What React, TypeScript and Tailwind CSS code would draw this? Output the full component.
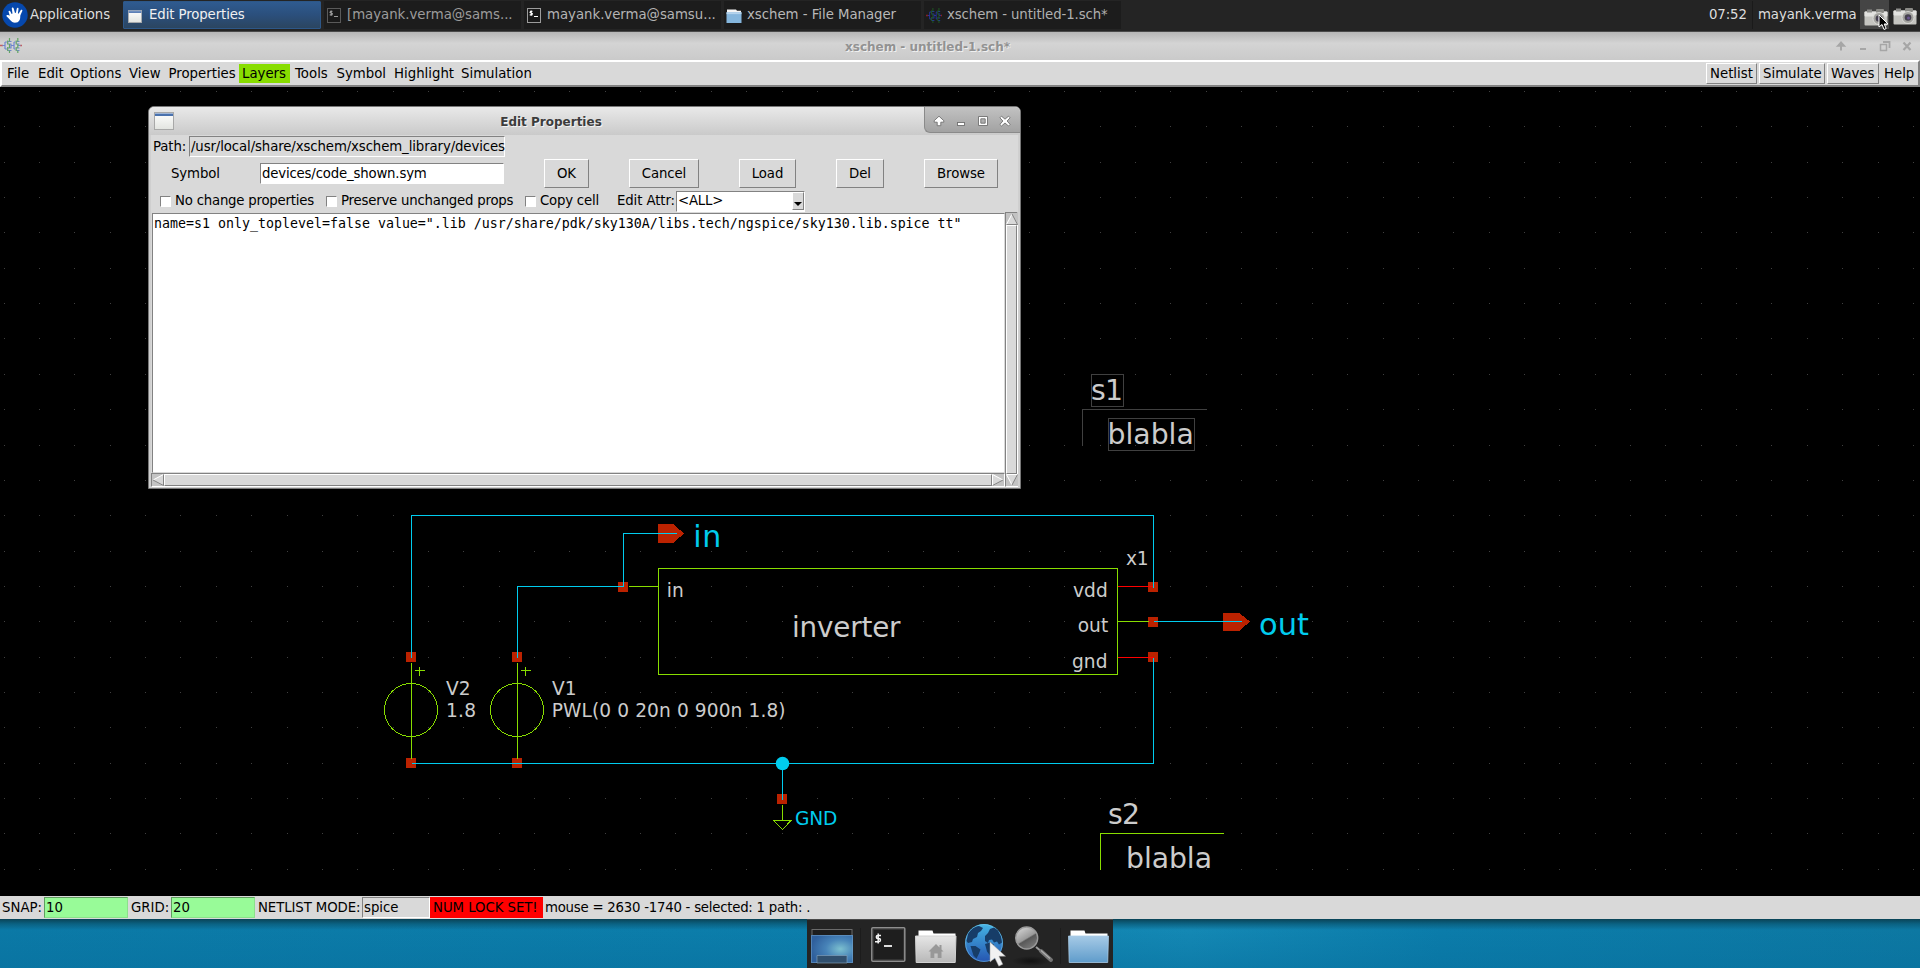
import React from "react";

const WIRE = "#00ccee";
const SYM = "#88dd00";
const PIN = "#bb2200";
const TXT = "#cccccc";

const FONT = "font-['DejaVu_Sans',sans-serif]";

function SchemIcon({ dim = false, className = "" }: { dim?: boolean; className?: string }) {
  const blue = dim ? "#26349c" : "#6f86cf";
  const green = dim ? "#1f5f22" : "#62a562";
  const red = dim ? "#8a2020" : "#c46060";
  return (
    <svg viewBox="0 0 22 15" className={className} fill="none" preserveAspectRatio="none">
      <path d="M0 7.500h3M20 7.500h2" stroke={red} strokeWidth="1.400" />
      <path d="M2.500 7.500H5M5 4v7M5 4h2M5 11h2M14 4v7M11 7.500h3M14 4h1.500M14 11h1.500M18 7.500h2.500" stroke={blue} strokeWidth="1.200" />
      <path d="M8 3.500h3.500M8 6h3.500M8 10h3.500M8 12.500h3.500M16.500 3.500h3M16.500 6h3M16.500 10h3M16.500 12.500h3M11 6v4" stroke={blue} strokeWidth="1.200" />
      <path d="M9.500 0v3.500M9.500 12.500V15M17.800 0v3.500M17.800 12.500V15M9.500 6v4M17.800 6v4M7.700 2.500v4M7.700 9v4M16.200 2.500v4M16.200 9v4" stroke={green} strokeWidth="1.200" />
    </svg>
  );
}

function WindowIcon({ className = "" }: { className?: string }) {
  return (
    <svg viewBox="0 0 20 18" className={className} preserveAspectRatio="none">
      <defs>
        <linearGradient id="winBody" x1="0" y1="0" x2="0" y2="1">
          <stop offset="0" stopColor="#ffffff" />
          <stop offset="1" stopColor="#e2e4e0" />
        </linearGradient>
      </defs>
      <rect x="0.5" y="0.5" width="19" height="17" fill="url(#winBody)" stroke="#a8a8a8" />
      <rect x="1" y="1" width="18" height="3" fill="#4a72ae" />
      <rect x="1" y="1" width="18" height="1" fill="#9db4d6" />
    </svg>
  );
}

function TermIcon({ dim = false }: { dim?: boolean }) {
  const c = dim ? "#9a9a9a" : "#ffffff";
  return (
    <svg viewBox="0 0 14 15" className="h-[15px] w-[14px]">
      <rect x="0.5" y="0.5" width="13" height="14" fill="#1a1a1a" stroke={dim ? "#5a5a5a" : "#9c9c9c"} />
      <path d="M5.400 3.400H3.600L3 4.300l2.400 1.500-.5 1.100H2.700M4.200 2.600v5.200M7 8.500h4" stroke={c} strokeWidth="1.100" fill="none" />
    </svg>
  );
}

function FolderIcon() {
  return (
    <svg viewBox="0 0 16 15" className="mt-px h-[14px] w-[16px]" preserveAspectRatio="none">
      <path d="M1 3V0.500h9l1 1.500h4V6H1z" fill="#f4f4f4" />
      <rect x="0.500" y="3.500" width="15" height="11.500" fill="#85b6dd" />
      <rect x="0.500" y="3.500" width="15" height="2" fill="#b4d3ec" />
    </svg>
  );
}

function Camera() {
  return (
    <svg viewBox="0 0 24 17" className="h-[17px] w-[24px]">
      <rect x="0.500" y="2.500" width="23" height="14" rx="1" fill="#c4c4c0" />
      <rect x="0.500" y="2.500" width="23" height="5" rx="1" fill="#e2e2e0" />
      <rect x="3" y="0.500" width="5" height="3" fill="#8c8c8a" />
      <rect x="12" y="0" width="8" height="4" rx="1" fill="#8a8a86" />
      <circle cx="15" cy="9.500" r="6" fill="#a2a29e" stroke="#e4e4e2" strokeWidth="0.800" />
      <circle cx="15" cy="9.500" r="3.300" fill="#45404f" />
      <circle cx="15.500" cy="10" r="1.500" fill="#6a5590" />
    </svg>
  );
}

const tasks = [
  { label: "[mayank.verma@sams...", icon: <TermIcon dim />, color: "text-[#9c9c9c] tracking-[-0.020px]" },
  { label: "mayank.verma@samsu...", icon: <TermIcon />, color: "text-[#b4b4b4] tracking-[-0.020px]" },
  { label: "xschem - File Manager", icon: <FolderIcon />, color: "text-[#b8b8b8] tracking-[-0.030px]" },
  { label: "xschem - untitled-1.sch*", icon: <SchemIcon dim className="h-[15px] w-[16px]" />, color: "text-[#b0b0b0] tracking-[-0.100px]" },
];

function Panel() {
  return (
    <div className="flex h-8 items-start border-b border-[#4a4a4a] bg-[#242424] text-[13.300px] leading-[30px] tracking-[-0.100px] text-[#dedede]">
      <div className="flex h-[30px] w-[123px] items-center pl-[2px]">
        <svg viewBox="0 0 26 26" className="h-[26px] w-[26px] shrink-0">
          <circle cx="13" cy="13" r="12.700" fill="#0648ad" />
          <path
            d="M6.500 9.500c.2-1.200 1.500-1 1.900 0l1.200 2.400.9-.3L9.800 6.700c-.1-1.300 1.500-1.500 1.900-.2l1.300 4.400.9-.1.900-4.200c.4-1.200 1.900-.9 1.700.4l-.6 4.300.7.400 2.200-3.600c.8-.9 2-.1 1.500 1l-1.900 4.100c-.3 1.200 0 2.300-.4 3.700-.5 1.900-1.700 3.200-3.700 3.700-2.700.5-4.700-.8-6.200-2.700-1.200-1.500-2.400-2.500-3.400-3.400-.7-1.100.2-1.900 1.400-1.400l1.700.7z"
            fill="#fff"
          />
        </svg>
        <span className="ml-[2px]">Applications</span>
      </div>
      <div className="mt-px flex h-7 w-[198px] items-center rounded-[1px] border border-[#2d5788] bg-gradient-to-b from-[#2f5b90] via-[#2b4f7c] to-[#2b4560] pl-1 text-[#f0f0f0]">
        <WindowIcon className="mt-[2px] h-[13px] w-[14px]" />
        <span className="ml-[7px]">Edit Properties</span>
      </div>
      <div className="flex pl-[3px]">
        {tasks.map((t) => (
          <div key={t.label} className={"mr-[3px] mt-px flex h-7 w-[197px] items-center bg-[#1c1c1c] pl-[2px] " + t.color}>
            <span className="flex w-4 shrink-0 justify-center">{t.icon}</span>
            <span className="ml-[5px] whitespace-nowrap">{t.label}</span>
          </div>
        ))}
      </div>
      <div className="ml-auto flex">
        <span className="w-[43px]">07:52</span>
        <span className="mt-px h-7 w-px bg-[#1a1a1a]" />
        <span className="w-[107px] pl-[5px]">mayank.verma</span>
        <div className="relative h-[29px] w-[29px] bg-[#454545] pl-1 pt-[9px]">
          <Camera />
          <svg viewBox="0 0 11 17" className="absolute left-[18px] top-[14px] h-[17px] w-[11px]">
            <path d="M1 1v12l3-2.500 2 5 2.200-1-2-4.500H10z" fill="#000" stroke="#fff" strokeWidth="1" />
          </svg>
        </div>
        <div className="w-[31px] pl-1 pt-2">
          <Camera />
        </div>
      </div>
    </div>
  );
}

const menus: [string, string][] = [
  ["File", "w-8 pl-[5px]"],
  ["Edit", "w-[33px] pl-1"],
  ["Options", "w-[58px] pl-[3px]"],
  ["View", "w-10 pl-1"],
  ["Properties", "w-[74px] pl-[3.500px]"],
  ["Layers", "w-[51px] pl-[3px] bg-[#88dd00]"],
  ["Tools", "w-[43px] pl-[5px]"],
  ["Symbol", "w-[57px] pl-[3.500px]"],
  ["Highlight", "w-[67px] pl-1"],
  ["Simulation", "w-[78px] pl-1"],
];

function TitleBar() {
  return (
    <div className="relative flex h-7 items-center justify-center bg-gradient-to-b from-[#b6b6b6] via-[#d4d4d4] via-40% to-[#cacaca]">
      <SchemIcon className="absolute left-0 top-[6px] h-[15px] w-[22px]" />
      <span className="pr-[65px] pt-[2px] text-[12px] font-bold text-[#929292] [text-shadow:1px_1px_0_#f0f0f0]">
        xschem - untitled-1.sch*
      </span>
      <svg viewBox="1830 32 90 28" className="absolute right-0 top-0 h-7 w-[90px]" fill="none" stroke="#a6a6a6">
        <path d="M1841 50.500v-7M1838 45.800l3-3.300 3 3.300z" strokeWidth="2" />
        <path d="M1860 49h6" strokeWidth="2" />
        <rect x="1880.500" y="44.500" width="6" height="6" strokeWidth="1.500" />
        <path d="M1883 42h6.500v6" strokeWidth="1.800" />
        <path d="M1903.500 42.500l7 7.500M1910.500 42.500l-7 7.500" strokeWidth="2.200" />
      </svg>
    </div>
  );
}

const raised = "border border-t-white border-l-white border-b-[#828282] border-r-[#828282]";
const sunken = "border border-t-[#828282] border-l-[#828282] border-b-white border-r-white";

function MenuBar() {
  return (
    <div className="flex h-[27px] border-2 border-b-[#828282] border-l-white border-r-[#828282] border-t-white bg-[#d9d9d9] text-[13.300px] text-black">
      {menus.map(([m, c]) => (
        <span key={m} className={"mt-[2px] block h-[19px] whitespace-nowrap leading-[19px] " + c}>
          {m}
        </span>
      ))}
      <div className="ml-auto flex pt-px leading-[19px]">
        <span className={"mr-[2px] h-[21px] w-[51px] pl-[3px] " + raised}>Netlist</span>
        <span className={"mr-[2px] h-[21px] w-[66px] pl-[3px] " + raised}>Simulate</span>
        <span className={"mr-[2px] h-[21px] w-[52px] pl-[3px] " + raised}>Waves</span>
        <span className="h-[21px] w-[37px] pl-[3px] leading-[21px]">Help</span>
      </div>
    </div>
  );
}

const dots: [number, number][] = [];
for (let j = 0; j < 23; j++) {
  for (let i = 0; i < 55; i++) {
    dots.push([Math.floor(4.2 + 35.355 * i), Math.floor(91.5 + 35.355 * j)]);
  }
}
const dotPath = dots.map(([x, y]) => `M${x} ${y}h1v1h-1z`).join("");

const pins: [number, number][] = [
  [618, 582], [406, 652], [512, 652], [406, 758], [512, 758],
  [777, 794], [1148, 582], [1148, 617], [1148, 652],
];

const labels: { t: string; x: number; y: number; s: number; w: number; c: string }[] = [
  { t: "s1", x: 1091, y: 400, s: 28.3, w: 32, c: TXT },
  { t: "blabla", x: 1107.5, y: 444, s: 28.3, w: 86.3, c: TXT },
  { t: "s2", x: 1108, y: 824, s: 28.3, w: 32, c: TXT },
  { t: "blabla", x: 1126, y: 868, s: 28.3, w: 86, c: TXT },
  { t: "in", x: 693.3, y: 547, s: 30, w: 28, c: WIRE },
  { t: "out", x: 1259, y: 635, s: 30.5, w: 50, c: WIRE },
  { t: "inverter", x: 792, y: 637, s: 27.8, w: 108.5, c: TXT },
  { t: "in", x: 666.8, y: 597, s: 18.6, w: 17, c: TXT },
  { t: "vdd", x: 1073, y: 597, s: 18.6, w: 34.7, c: TXT },
  { t: "out", x: 1077.7, y: 632, s: 18.6, w: 30.5, c: TXT },
  { t: "gnd", x: 1072, y: 668, s: 18.6, w: 35.5, c: TXT },
  { t: "x1", x: 1126, y: 565, s: 18.6, w: 22.5, c: TXT },
  { t: "V2", x: 446, y: 695, s: 18.6, w: 24.7, c: TXT },
  { t: "1.8", x: 446, y: 717, s: 18.6, w: 30, c: TXT },
  { t: "V1", x: 552, y: 695, s: 18.6, w: 24.7, c: TXT },
  { t: "PWL(0 0 20n 0 900n 1.8)", x: 551.8, y: 717, s: 18.6, w: 233.8, c: TXT },
  { t: "GND", x: 795, y: 825, s: 18.6, w: 42.3, c: WIRE },
];

function Schematic() {
  return (
    <svg viewBox="0 87 1920 809" className="block h-[809px] w-[1920px]">
      <path d={dotPath} fill="#404040" shapeRendering="crispEdges" />
      <g shapeRendering="crispEdges" fill={PIN}>
        {pins.map(([x, y]) => (
          <rect key={x + "-" + y} x={x} y={y} width="10" height="10" />
        ))}
        <path d="M658 524h15l11 9.500-11 9.500h-15z" />
        <path d="M1223 613h16l11 8.500-11 9.500h-16z" />
      </g>
      <g transform="translate(.5 .5)" fill="none" shapeRendering="crispEdges">
        <g stroke={SYM}>
          <path d="M658 568H1117V674H658zM628 586H658M1117 621H1148" />
          <path d="M411 662V758M517 662V758M414.500 670h10M419 666v9M520.500 670h10M525 666v9" />
          <path d="M782 804V820M773 820H790.500L782 829z" />
          <path d="M1100 869.500V833H1223.500" />
          <circle cx="410.500" cy="709.500" r="26.500" />
          <circle cx="516.500" cy="709.500" r="26.500" />
        </g>
        <path d="M1117 586H1153M1117 657H1153" stroke="#ff0000" />
        <path d="M1206.500 409H1082V445.500M1091 374h32v32h-32zM1108 418h86v32h-86z" stroke="#404040" />
        <g stroke={WIRE}>
          <path d="M411 657V515H1153V587M517 657V586H623V533H676M411 763H1153V657M1153 621H1241M782 763V799" />
        </g>
      </g>
      <circle cx="782.500" cy="763.500" r="6.800" fill={WIRE} />
      <g className={FONT}>
        {labels.map((l, i) => (
          <text key={i} x={l.x} y={l.y} fontSize={l.s} textLength={l.w} fill={l.c}>
            {l.t}
          </text>
        ))}
      </g>
    </svg>
  );
}

function Check({ label, width }: { label: string; width: string }) {
  return (
    <div className={"flex items-center " + width}>
      <span className="block h-[11px] w-[11px] border border-b-white border-l-[#828282] border-r-white border-t-[#828282] bg-white" />
      <span className="ml-1 whitespace-nowrap tracking-[-0.220px]">{label}</span>
    </div>
  );
}

function Btn({ children, c }: { children: React.ReactNode; c: string }) {
  return <button className={"h-[29px] shrink-0 text-center leading-[26px] " + raised + " " + c}>{children}</button>;
}

function Arrow({ d, light, dark }: { d: string; light: string; dark: string }) {
  return (
    <svg viewBox="0 0 12 12" className="h-3 w-3 shrink-0 bg-[#c3c3c3]">
      <path d={d} fill="#d9d9d9" />
      <path d={light} stroke="#fff" fill="none" />
      <path d={dark} stroke="#828282" fill="none" />
    </svg>
  );
}

function Dialog() {
  return (
    <div className="absolute left-[148px] top-[19px] flex h-[383px] w-[873px] flex-col overflow-hidden rounded-t-[6px] border border-[#777] bg-[#cfcfcf] text-[13.300px] tracking-[-0.110px] text-black">
      <div className="relative flex h-7 shrink-0 items-center justify-center bg-gradient-to-b from-[#e9e9e9] to-[#cacaca]">
        <WindowIcon className="absolute left-[5px] top-[5px] h-[18px] w-[20px]" />
        <span className="mr-[67px] pt-[2px] text-[12px] font-bold tracking-normal text-[#3c3c3c] [text-shadow:1px_1px_0_#f4f4f4]">
          Edit Properties
        </span>
        <div className="absolute right-0 top-0 h-[26px] w-[96px] rounded-bl-[6px] border-b border-l border-[#8a8a8a] bg-gradient-to-b from-[#c2c2c2] to-[#a2a2a2]">
          <svg viewBox="925 107 95 25" className="h-[25px] w-[95px]">
            <g fill="#fff" stroke="#707070" strokeWidth="0.900">
              <path d="M939 116.200l4.800 4.500v1.500h-3v3.500h-3.600v-3.500h-3v-1.500z" />
              <rect x="957.500" y="122.500" width="7" height="3" />
              <path d="M978.500 116.500h9v9h-9zM980.800 118.800v4.400h4.400v-4.400z" fillRule="evenodd" />
              <path d="M1001.500 116.200l3.500 3 3.500-3 1.600 1.600-3 3.200 3 3.400-1.600 1.600-3.500-3-3.500 3-1.600-1.600 3-3.400-3-3.200z" />
            </g>
          </svg>
        </div>
      </div>
      <div className="mx-[2px] mb-px flex flex-1 flex-col bg-[#d9d9d9]">
        <div className="flex h-[23px] items-start pl-[2px] pt-px leading-[21px]">
          <span className="w-9">Path:</span>
          <span className={"h-[21px] w-[316px] whitespace-nowrap pl-px leading-[19px] " + sunken}>
            /usr/local/share/xschem/xschem_library/devices
          </span>
        </div>
        <div className="flex h-8 items-start pt-px">
          <span className="w-[109px] pl-5 leading-[29px]">Symbol</span>
          <span className={"mt-1 h-[21px] w-[244px] bg-white pl-px leading-[19px] tracking-[-0.180px] " + sunken}>devices/code_shown.sym</span>
          <Btn c="ml-10 w-[45px]">OK</Btn>
          <Btn c="ml-10 w-[70px]">Cancel</Btn>
          <Btn c="ml-10 w-[57px]">Load</Btn>
          <Btn c="ml-10 w-[48px]">Del</Btn>
          <Btn c="ml-10 w-[74px]">Browse</Btn>
        </div>
        <div className="flex h-[22px] items-center pl-[9px]">
          <Check label="No change properties" width="w-[166px]" />
          <Check label="Preserve unchanged props" width="w-[199px]" />
          <Check label="Copy cell" width="w-[92px]" />
          <span className="w-[59px] whitespace-nowrap">Edit Attr:</span>
          <span className={"flex h-[21px] w-[129px] items-center justify-between bg-white pl-px " + sunken}>
            <span className="tracking-[-0.200px]">&lt;ALL&gt;</span>
            <span className={"flex h-[18px] w-3 items-end justify-center bg-[#d9d9d9] pb-[3px] " + raised}>
              <svg viewBox="0 0 8 4" className="h-1 w-2">
                <path d="M0 0h8L4 4z" fill="#000" />
              </svg>
            </span>
          </span>
        </div>
        <div className="flex flex-1">
          <div className="flex flex-1 flex-col">
            <div className="ml-px mt-px h-[260px] w-[853px] whitespace-pre border border-b-[#d9d9d9] border-l-[#828282] border-r-[#d9d9d9] border-t-[#828282] bg-white pl-px pt-px font-['DejaVu_Sans_Mono',monospace] text-[13.290px] leading-[18px] tracking-normal">
              {'name=s1 only_toplevel=false value=".lib /usr/share/pdk/sky130A/libs.tech/ngspice/sky130.lib.spice tt"'}
            </div>
            <div className="flex h-[14px] w-[854px] items-center border border-b-white border-l-[#828282] border-r-white border-t-[#828282] bg-[#c3c3c3]">
              <Arrow d="M11 0v12L1 6z" light="M11.500 0.500L1 6" dark="M1 6l10.500 5.500v-11" />
              <span className={"h-3 flex-1 bg-[#d9d9d9] " + raised} />
              <Arrow d="M1 0v12l10-6z" light="M0.500 12V0.500L11 6" dark="M11 6L0.500 11.500" />
            </div>
          </div>
          <div className="flex h-[275px] w-[13px] flex-col items-center border border-b-white border-l-[#828282] border-r-white border-t-[#828282] bg-[#c3c3c3]">
            <Arrow d="M0 11h12L6 1z" light="M0.500 11.500L6 1" dark="M6 1l5.500 10.500H0.500" />
            <span className={"w-[11px] flex-1 bg-[#d9d9d9] " + raised} />
            <Arrow d="M0 1h12L6 11z" light="M12 0.500H0.500L6 11" dark="M6 11L11.500 0.500" />
          </div>
        </div>
      </div>
    </div>
  );
}

function StatusBar() {
  return (
    <div className="flex h-[23px] items-center whitespace-nowrap bg-[#d9d9d9] text-[13.300px] leading-[19px] text-black">
      <span className="w-11 pl-[2px]">SNAP:</span>
      <span className="h-[21px] w-[84px] border border-b-[#8be08b] border-l-[#5f9e5f] border-r-[#8be08b] border-t-[#5f9e5f] bg-[#98fb98] pl-px">10</span>
      <span className="w-[43px] pl-[3px]">GRID:</span>
      <span className="h-[21px] w-[84px] border border-b-[#8be08b] border-l-[#5f9e5f] border-r-[#8be08b] border-t-[#5f9e5f] bg-[#98fb98] pl-px">20</span>
      <span className="w-[107px] pl-[3px] tracking-[-0.100px]">NETLIST MODE:</span>
      <span className={"h-[21px] w-[68px] pl-px " + sunken}>spice</span>
      <span className="h-[21px] w-[113px] bg-[#ff0000] pl-[3px] leading-[21px] tracking-[-0.050px]">NUM LOCK SET!</span>
      <span className="pl-[2px] tracking-[-0.240px]">mouse = 2630 -1740 - selected: 1 path: .</span>
    </div>
  );
}

function Dock() {
  return (
    <div className="flex h-[49px] justify-center bg-[linear-gradient(180deg,#0a4356_0px,rgba(10,92,122,0.8)_5px,rgba(11,106,143,0)_11px,rgba(8,112,158,0.5)_49px),linear-gradient(90deg,#0b79a6,#0c7eab_45%,#1488b4_62%,#0b7caa_75%,#0d78a2)]">
      <div className="flex w-[306px] border-t border-[#4a4a4a] bg-[#242424]">
        <svg viewBox="807 920 57 48" className="h-12 w-[57px]">
          <defs>
            <radialGradient id="desk" cx="0.700" cy="0.500" r="0.700">
              <stop offset="0" stopColor="#7cc0cf" />
              <stop offset="0.500" stopColor="#4783b8" />
              <stop offset="1" stopColor="#2f5f9c" />
            </radialGradient>
          </defs>
          <rect x="812" y="929.500" width="40" height="8" fill="#1d1d1d" stroke="#6a6a6a" />
          <rect x="811" y="935" width="42" height="28" fill="url(#desk)" />
          <rect x="811.500" y="935.500" width="41" height="27" fill="none" stroke="#78a6cc" strokeOpacity="0.500" />
          <path d="M817 963v-7.500h30V963z" fill="#31506e" stroke="#8aa7bf" strokeOpacity="0.600" />
          <path d="M860.500 928v36" stroke="#1c1c1c" />
        </svg>
        <svg viewBox="864 920 47 48" className="h-12 w-[47px]">
          <rect x="871.800" y="927.800" width="33" height="33.500" rx="1" fill="#1e1e1e" stroke="#8e8e8e" strokeWidth="1.500" />
          <rect x="873.500" y="929.500" width="30" height="30" fill="none" stroke="#333" />
          <path d="M881 935.500h-3.200c-2 0-2 3 0 3h1c2.200 0 2.200 3.200 0 3.200H875M878.200 933.500v10" stroke="#f4f4f4" strokeWidth="1.500" fill="none" />
          <path d="M884 946h8" stroke="#f4f4f4" strokeWidth="1.800" />
        </svg>
        <svg viewBox="911 920 48 48" className="h-12 w-12">
          <defs>
            <linearGradient id="homeG" x1="0" y1="0" x2="0" y2="1">
              <stop offset="0" stopColor="#e6e6e6" />
              <stop offset="1" stopColor="#b8b8b8" />
            </linearGradient>
          </defs>
          <path d="M918.500 938v-7.500h14l1 3H955.500V938z" fill="#fff" />
          <path d="M915.500 936h40.500l-.8 26.500h-39z" fill="url(#homeG)" stroke="#d2d2d2" />
          <path d="M928.500 951.500l7.500-7.500 3.500 3.400V945h2v4.500l2 2h-2v6.500h-3.800v-4.500h-3.400v4.500h-3.800v-6.500z" fill="#989898" />
        </svg>
        <svg viewBox="959 920 51 48" className="h-12 w-[51px]">
          <defs>
            <linearGradient id="sea" x1="0" y1="0" x2="0" y2="1">
              <stop offset="0" stopColor="#45b4e4" />
              <stop offset="1" stopColor="#2554b0" />
            </linearGradient>
          </defs>
          <circle cx="984" cy="943" r="19" fill="url(#sea)" />
          <circle cx="984" cy="943" r="18.400" fill="none" stroke="#7fd0ee" strokeOpacity="0.500" />
          <path d="M968 934c3-5 7-7.500 11-8l4 2-2 3-3 2-1 4-4 2-1 3-4 1-1.500-2zM970.500 946l5 0 5 3.500-1.500 4-2.500 5-3-3-1.500-4.500zM985 936l3-3 2-4 4-1.500 4 3 3 6 1 6-3 2-2-3-3 1-2-3-3 .5-1 3-3-2z" fill="#173d68" />
          <path d="M985 944l5-1.500 4 2-2 5-2 6-3-4z" fill="#173d68" />
          <path d="M990 942v20l4.800-4 4 8.200 4-2-3.800-8h6.500z" fill="#f2f2f2" stroke="#999" strokeWidth="0.500" />
        </svg>
        <svg viewBox="1010 920 48 48" className="h-12 w-12">
          <defs>
            <linearGradient id="lens" x1="0.200" y1="0" x2="0.800" y2="1">
              <stop offset="0" stopColor="#d4d4d4" />
              <stop offset="0.500" stopColor="#9a9a9a" />
              <stop offset="0.560" stopColor="#585858" />
              <stop offset="1" stopColor="#808080" />
            </linearGradient>
            <radialGradient id="shade">
              <stop offset="0" stopColor="#111" />
              <stop offset="1" stopColor="#111" stopOpacity="0" />
            </radialGradient>
          </defs>
          <ellipse cx="1031" cy="961" rx="19" ry="5" fill="url(#shade)" />
          <path d="M1036 947l6 5" stroke="#9c9c9c" strokeWidth="2" />
          <path d="M1041 951l10 9" stroke="#747474" strokeWidth="4" strokeLinecap="round" />
          <path d="M1041 950.500l9 8" stroke="#b0b0b0" strokeWidth="1.200" />
          <circle cx="1026.700" cy="938" r="11" fill="url(#lens)" stroke="#9a9a9a" strokeWidth="1.400" />
        </svg>
        <svg viewBox="1058 920 55 48" className="h-12 w-[55px]">
          <defs>
            <linearGradient id="blueF" x1="0" y1="0" x2="0" y2="1">
              <stop offset="0" stopColor="#a6cae6" />
              <stop offset="1" stopColor="#5f9ccb" />
            </linearGradient>
          </defs>
          <path d="M1060.500 928v36" stroke="#1c1c1c" />
          <path d="M1070.500 938v-7.500h14l1 3H1107.500V938z" fill="#fff" />
          <path d="M1068.500 936h40l-.8 26.500h-38.500z" fill="url(#blueF)" stroke="#a9cbe6" strokeWidth="0.800" />
        </svg>
      </div>
    </div>
  );
}

export default function App() {
  return (
    <div className={"flex h-[968px] w-[1920px] flex-col overflow-hidden bg-black " + FONT}>
      <Panel />
      <TitleBar />
      <MenuBar />
      <div className="relative h-[809px] bg-black">
        <Schematic />
        <Dialog />
      </div>
      <StatusBar />
      <Dock />
    </div>
  );
}
